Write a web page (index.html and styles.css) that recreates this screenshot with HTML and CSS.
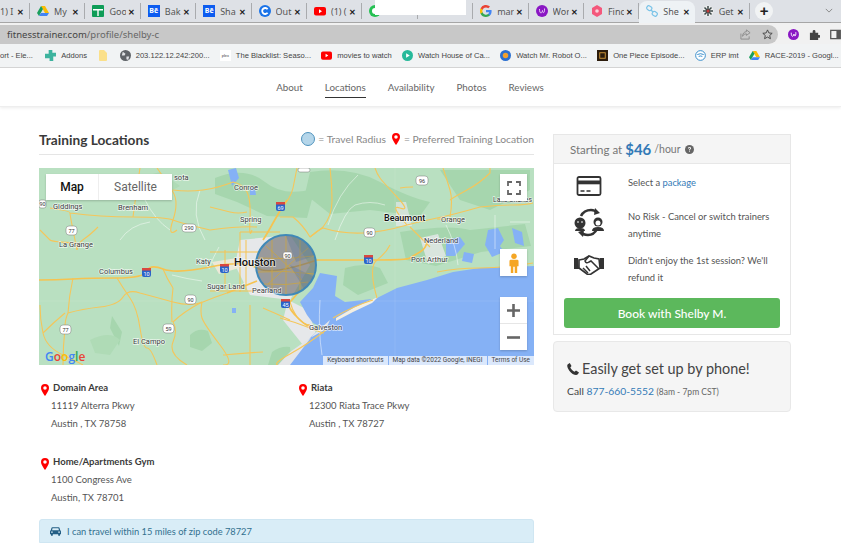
FILE: index.html
```html
<!DOCTYPE html>
<html lang="en">
<head>
  <meta charset="UTF-8">
  <meta name="viewport" content="width=device-width, initial-scale=1.0">
  <title>Shelby C. - Training Locations</title>
  <link rel="stylesheet" href="styles.css">
</head>
<body>
  <!-- browser chrome -->
  <div class="browser">
    <div class="tabstrip">
      <div class="tab tab-first"><span class="tab-label">1) I</span><span class="tab-x">✕</span></div>
      <div class="tab">
        <svg class="fav" viewBox="0 0 12 12"><path d="M4 1h4l4 7H8z" fill="#fbbc04"/><path d="M4 1 0 8l2 3 4-7z" fill="#1a9f5c"/><path d="M2 11h8l2-3H4z" fill="#4285f4"/></svg>
        <span class="tab-label">My</span><span class="tab-x">✕</span>
      </div>
      <div class="tab">
        <svg class="fav" viewBox="0 0 12 12"><rect width="12" height="12" rx="1" fill="#0f9d58"/><path d="M1 4h10v1.400H6.700V11H5.300V5.400H1z" fill="#fff"/></svg>
        <span class="tab-label">Goo</span><span class="tab-x">✕</span>
      </div>
      <div class="tab">
        <span class="fav fav-be">Bē</span>
        <span class="tab-label">Bak</span><span class="tab-x">✕</span>
      </div>
      <div class="tab">
        <span class="fav fav-be">Bē</span>
        <span class="tab-label">Sha</span><span class="tab-x">✕</span>
      </div>
      <div class="tab">
        <svg class="fav" viewBox="0 0 12 12"><circle cx="6" cy="6" r="6" fill="#1a73e8"/><path d="M8.600 4.200A3 3 0 1 0 8.600 7.800" fill="none" stroke="#fff" stroke-width="1.800"/></svg>
        <span class="tab-label">Out</span><span class="tab-x">✕</span>
      </div>
      <div class="tab">
        <svg class="fav" viewBox="0 0 12 12"><rect y="2" width="12" height="8.400" rx="2" fill="#f00"/><path d="M5 4.200 8 6.200 5 8.200z" fill="#fff"/></svg>
        <span class="tab-label">(1) (</span><span class="tab-x">✕</span>
      </div>
      <div class="tab">
        <svg class="fav" viewBox="0 0 12 12"><circle cx="6" cy="6" r="6" fill="#25c052"/><circle cx="6" cy="6" r="3" fill="#fff"/></svg>
      </div>
      <div class="tab"></div>
      <div class="tab">
        <svg class="fav" viewBox="0 0 12 12"><path d="M11.600 6.200c0-.4 0-.8-.1-1.200H6v2.300h3.200A2.800 2.800 0 0 1 8 9.100v1.500h1.900c1.100-1 1.700-2.500 1.700-4.400z" fill="#4285f4"/><path d="M6 12c1.600 0 3-.5 3.900-1.400L8 9.100a3.600 3.600 0 0 1-5.400-1.900H.6v1.500A6 6 0 0 0 6 12z" fill="#34a853"/><path d="M2.600 7.200a3.600 3.600 0 0 1 0-2.400V3.300H.6a6 6 0 0 0 0 5.400z" fill="#fbbc04"/><path d="M6 2.400c.9 0 1.700.3 2.300.9L10 1.600A6 6 0 0 0 .6 3.300l2 1.500A3.600 3.600 0 0 1 6 2.400z" fill="#ea4335"/></svg>
        <span class="tab-label">mar</span><span class="tab-x">✕</span>
      </div>
      <div class="tab">
        <svg class="fav" viewBox="0 0 12 12"><circle cx="6" cy="6" r="6" fill="#8a17c4"/><path d="M3.500 4c0 5 2.500 5 3 1.500C7 9 9 8 8.500 3.500" fill="none" stroke="#e9c8f7" stroke-width="1"/></svg>
        <span class="tab-label">Wor</span><span class="tab-x">✕</span>
      </div>
      <div class="tab">
        <svg class="fav" viewBox="0 0 12 12"><path d="M6 0 11 3v6l-5 3-5-3V3z" fill="#f4587c"/><circle cx="6" cy="6" r="1.800" fill="#fbd0da"/></svg>
        <span class="tab-label">Finc</span><span class="tab-x">✕</span>
      </div>
      <div class="tab tab-active">
        <svg class="fav" viewBox="0 0 12 12"><g fill="none" stroke="#7cc4e8" stroke-width="1.200"><rect x="0.800" y="1" width="5" height="4" rx="1.500" transform="rotate(35 3 3)"/><rect x="6.200" y="7" width="5" height="4" rx="1.500" transform="rotate(35 9 9)"/><path d="M5 5l2 2"/></g></svg>
        <span class="tab-label">She</span><span class="tab-x">✕</span>
      </div>
      <div class="tab">
        <svg class="fav" viewBox="0 0 12 12"><circle cx="6" cy="6" r="5.500" fill="#eee"/><path d="M1 6h10M6 1v10M2.500 2.500l7 7M9.500 2.500l-7 7" stroke="#3c4a4a" stroke-width="1.500"/><circle cx="6" cy="6" r="1.500" fill="#c23b3b"/></svg>
        <span class="tab-label">Get</span><span class="tab-x">✕</span>
      </div>
      <div class="new-tab">+</div>
      <svg class="tab-menu" viewBox="0 0 10 6"><path d="M1 1l4 4 4-4" fill="none" stroke="#777" stroke-width="1"/></svg>
    </div>

    <div class="toolbar">
      <div class="omnibox">
        <span class="url">fitnesstrainer.com<span class="url-path">/profile/shelby-c</span></span>
        <svg class="omni-icon" viewBox="0 0 12 12"><path d="M1 5v6h9V8M7 1l4 3-4 3V5.300C5 5.300 3.500 6 2.800 8 2.800 5 4.500 3 7 2.900z" fill="none" stroke="#8b8b8b" stroke-width="1"/></svg>
        <svg class="omni-icon" viewBox="0 0 12 12"><path d="M6 1l1.500 3.300 3.600.4-2.700 2.400.8 3.500L6 8.800l-3.200 1.800.8-3.500L.9 4.700l3.600-.4z" fill="none" stroke="#444" stroke-width="1"/></svg>
      </div>
      <svg class="ext" viewBox="0 0 12 12"><circle cx="6" cy="6" r="6" fill="#8a17c4"/><path d="M3.500 4c0 5 2.500 5 3 1.500C7 9 9 8 8.500 3.500" fill="none" stroke="#fff" stroke-width="1"/></svg>
      <svg class="ext" viewBox="0 0 12 12"><path d="M1 4h3V2.500a1.500 1.500 0 0 1 3 0V4h3v2.500h1a1.500 1.500 0 0 1 0 3h-1V12H1z" fill="#444"/></svg>
      <svg class="ext" viewBox="0 0 12 12"><rect x="0.800" y="1.500" width="10.400" height="9" fill="none" stroke="#555" stroke-width="1.400"/><rect x="7" y="1.500" width="4" height="9" fill="#555"/></svg>
    </div>

    <div class="bookmarks">
      <span class="bm bm-cut">ort - Ele...</span>
      <span class="bm">
        <svg class="bm-icon" viewBox="0 0 12 12"><path d="M4 0h4v3h4v4H9v5H5V9H0V4h4z" fill="#3db39e"/></svg>Addons</span>
      <span class="bm">
        <svg class="bm-icon bm-folder" viewBox="0 0 8 11"><path d="M0 1q0-1 1-1h4l3 3v7q0 1-1 1H1q-1 0-1-1z" fill="#fbe08a"/></svg></span>
      <span class="bm">
        <svg class="bm-icon" viewBox="0 0 12 12"><circle cx="6" cy="6" r="6" fill="#5f6368"/><path d="M3 2l3 2-1 2-3 0zM7 7l3 0-1 4-2-1z" fill="#dfe1e5"/></svg>203.122.12.242:200...</span>
      <span class="bm">
        <span class="bm-plex">plex</span>The Blacklist: Seaso...</span>
      <span class="bm">
        <svg class="bm-icon" viewBox="0 0 12 12"><rect y="1.500" width="12" height="9" rx="2" fill="#f00"/><path d="M5 4l3 2-3 2z" fill="#fff"/></svg>movies to watch</span>
      <span class="bm">
        <svg class="bm-icon" viewBox="0 0 12 12"><circle cx="6" cy="6" r="6" fill="#27b99a"/><path d="M4.500 3.500 8.500 6l-4 2.500z" fill="#fff"/></svg>Watch House of Ca...</span>
      <span class="bm">
        <svg class="bm-icon" viewBox="0 0 12 12"><circle cx="6" cy="6" r="6" fill="#2a6fd0"/><circle cx="6" cy="6" r="3" fill="#f0a030"/></svg>Watch Mr. Robot O...</span>
      <span class="bm">
        <svg class="bm-icon" viewBox="0 0 12 12"><rect width="12" height="12" fill="#2c1c0c"/><rect x="3" y="3" width="6" height="6" fill="none" stroke="#d49a3a" stroke-width="1"/></svg>One Piece Episode...</span>
      <span class="bm">
        <svg class="bm-icon" viewBox="0 0 12 12"><circle cx="6" cy="6" r="5.300" fill="#fff" stroke="#2a86c8"/><path d="M2.500 5q3.500-2 7 0M4 7q2-1 4 0" fill="none" stroke="#2a86c8"/></svg>ERP imt</span>
      <span class="bm">
        <svg class="bm-icon" viewBox="0 0 12 12"><path d="M4 1h4l4 7H8z" fill="#fbbc04"/><path d="M4 1 0 8l2 3 4-7z" fill="#1a9f5c"/><path d="M2 11h8l2-3H4z" fill="#4285f4"/></svg>RACE-2019 - Googl...</span>
    </div>
    <div class="redacted"></div>
  </div>

  <!-- profile sub navigation -->
  <nav class="subnav">
    <a>About</a>
    <a class="current">Locations</a>
    <a>Availability</a>
    <a>Photos</a>
    <a>Reviews</a>
  </nav>

  <div class="page">
    <main class="main-col">
      <div class="section-head">
        <h2>Training Locations</h2>
        <div class="legend">
          <span class="legend-circle"></span><span>= Travel Radius</span>
          <svg class="pin legend-pin" viewBox="0 0 10 15"><path d="M5 0a5 5 0 0 0-5 5c0 3.500 5 10 5 10s5-6.500 5-10a5 5 0 0 0-5-5zm0 7.200a2.200 2.200 0 1 1 0-4.400 2.200 2.200 0 0 1 0 4.400z" fill="#f00"/></svg>
          <span>= Preferred Training Location</span>
        </div>
      </div>

      <div class="map">
        <svg class="map-svg" viewBox="39 168 495 197" preserveAspectRatio="none">
          <rect x="39" y="168" width="495" height="197" fill="#b9e0c1"/>
          <!-- darker forest patches -->
          <g fill="#a6d6ae">
            <path d="M215 178q30-12 50 4t50 6l-8 30-40-2-30-14-22-8z"/>
            <path d="M310 172q40-6 70 10t50 20l-10 14-50-6-40 4-25-20z"/>
            <path d="M400 232q50-8 70-2l55-6 6 22-50 6-45 14-30-6z"/>
            <path d="M345 268q20-6 35 0l8 15-30 12-15-10z"/>
            <path d="M190 335q8-8 18-4l4 12-10 8-12-4z"/>
            <path d="M272 352q8-6 18-5l2 18h-24z"/>
            <path d="M112 316l10 16-3 14-9-18z"/>
            <path d="M440 170h90v20l-40 20-30-10z"/>
            <path d="M130 180l30-8 20 14-25 14z" fill="#afdbb6"/>
            <path d="M90 340q20-10 30 0l-10 15-15-2z" fill="#afdbb6"/>
          </g>
          <!-- urban grey -->
          <g fill="#e6e8ea">
            <path d="M240 240l50-5 20 30-20 35-40-5-15-30z"/>
            <path d="M288 300l20 10 10 30-15 5-20-25z"/>
            <path d="M396 202l10 0 6 24-16 0z" opacity=".7"/>
            <path d="M212 262l25-4 2 10-20 6z" fill="#ece8d8"/>
            <path d="M420 238l18-4 8 22-18 8z" opacity=".8"/>
          </g>
          <!-- inland water -->
          <g fill="#85b1f5">
            <path d="M228 170l8-2 3 10-7 8z"/>
            <path d="M250 188l5 0 1 7-6 0z"/>
            <path d="M446 240l14-3 5 7-10 12-9 0z"/>
            <path d="M488 230l10-2 6 12-4 6 4 6-12 5-7-12z"/>
            <path d="M512 228l10 4 2 14-9-3z"/>
            <path d="M464 252l10 2-2 9-10-2z"/>
            <path d="M232 308l4 0 0 5-4 0z"/>
          </g>
          <!-- gulf and galveston bay -->
          <path d="M534 266 480 268 453 272 427 280 397 288 377 298 353 307 330 320 313 335 293 355 280 365H534z" fill="#85b1f5"/>
          <path d="M372 299 345 302 335 296 337 276 320 273 313 288 300 302 307 315 313 323 323 328 335 320 353 308z" fill="#85b1f5"/>
          <path d="M326 329 310 338 290 352 278 365H290L313 335 330 320z" fill="#e4e6e8"/>
          <path d="M336 318 355 307 378 297 372 303 353 312 336 321z" fill="#f3efe2"/>
          <path d="M395 168V365M39 301H534" stroke="#fff" stroke-width=".5" opacity=".2" fill="none"/>

          <!-- minor roads -->
          <g fill="none" stroke="#fff" stroke-width=".6" opacity=".8">
            <path d="M145 200q10 20 25 30M200 190q-10 25 5 50M219 247q-6 10-10 22M120 240q10-15 30-18M172 275q15 4 30 6M358 175q-20 18-30 50M320 300q-2 30 2 55M385 205q-15-5-30 0-10 5-20 35M446 225q10 20 12 40M495 215v34M510 222h20"/>
          </g>

          <!-- highways -->
          <g fill="none" stroke="#f5c65a" stroke-width="1.100">
            <path d="M40 230q8 8 10 10t27 3M50 208q20 3 20 5t3 17 4 20M70 213q30 4 63 4t40 3 37 10q30-4 47-3"/>
            <path d="M157 168q10 14 16 24t0 28 4 10M173 190q15 2 30 0t30-8q10 2 14 10t3 28 2 10"/>
            <path d="M210 207q12 3 20 5t17 0M133 217q4-30 7-49M98 227q-8 8-14 12t-7 11"/>
            <path d="M297 168q-2 10-4 20t-13 22M280 217h13q10 8 17 20M330 168q2 16 2 32t-9 27q-6 5-13 10"/>
            <path d="M310 237q6-6 13-9 20 6 40 5t44-8q15-4 30-7t43-11q20-2 33-2t20-2"/>
            <path d="M375 168q2 6 5 10t17 19 3 11 7 17M413 187q-8 0-13 1M443 168q4 12 7 22t0 27M410 227q10 10 20 20M437 219q10 0 23 1M490 168v5q-10 10-23 17t-17 10"/>
            <path d="M390 245q-4 8-13 15t0 38M437 272q20-4 43-4t53-5"/>
            <path d="M117 278q6 10 13 20t10 30 7 20 10 17M68 313q14-4 32-6t23-10 17-4q15 4 33 9t30 0 24-9"/>
            <path d="M173 322q5 8 0 20t14 23M173 322q10-10 29-20M173 288q-2 15-1 34M163 269q4 10 10 19M202 302q-2 10 0 16t18 27 3 20M223 355q20-2 40-3M250 305v60"/>
            <path d="M65 328q-2 18-2 37M68 313q-3 6-3 15M40 305q0 14 3 28t20 22 20 10M43 333q10-10 22-20M73 278q-4 18-5 35"/>
            <path d="M263 308q14 6 27 12M280 318q15 4 30 10t13 5M290 302q2 8 7 15t13 8M326 330q-18 14-36 24t-12 11M333 318q20-12 40-18"/>
          </g>
          <g fill="none" stroke="#f6c350" stroke-width="1.700">
            <path d="M39 280q17 0 34-1t44-1 30-7 16-2 47-2 47 1 60-8q30 0 60 0t33-2 10-6 7-12"/>
            <path d="M287 200q-8 12-14 23t-10 17"/>
            <path d="M300 290q-6 8-10 12t7 15 13 8"/>
            <path d="M227 293q15-6 30-12"/>
          </g>
          <g fill="none" stroke="#f6c350" stroke-width="1">
            <path d="M210 252h50M210 291h45M240 232v60M246 240v50M225 250v40M240 232h40"/>
          </g>

          <!-- travel radius -->
          <circle cx="286" cy="265" r="30" fill="#6b6b6b" fill-opacity=".62" stroke="#3f89b8" stroke-width="2"/>
          <g fill="none" stroke="#c9a544" stroke-width=".8">
            <path d="M258 258q28 2 56-2M258 272q28-2 56 2M264 284q22 2 44-2M272 240v50M286 236v58M300 240v50M266 246q16 14 36 34M308 248q-18 16-40 36"/>
          </g>
          <path d="M286 236a29 29 0 0 1 28 20l-18 6z" fill="#4d6fa0" opacity=".3"/>
          <path d="M290 265l24 12-10 12z" fill="#4d6fa0" opacity=".28"/>

          <!-- highway shields -->
          <g class="shields" font-size="5.500" text-anchor="middle">
            <g fill="#fff" stroke="#777" stroke-width=".5">
              <rect x="39" y="200" width="7" height="8" rx="2"/><rect x="66" y="226" width="11" height="9" rx="3"/><rect x="182" y="224" width="14" height="8" rx="3"/>
              <rect x="298" y="168" width="12" height="4" rx="2"/><rect x="416" y="176" width="12" height="9" rx="3"/><rect x="364" y="228" width="11" height="9" rx="3"/>
              <rect x="185" y="295" width="11" height="9" rx="3"/><rect x="163" y="324" width="11" height="9" rx="3"/><rect x="60" y="325" width="11" height="9" rx="3"/>
              <rect x="283" y="252" width="9" height="7" rx="2"/>
            </g>
            <g fill="#333" stroke="none">
              <text x="42.500" y="206">90</text><text x="71.500" y="233">77</text><text x="189" y="230">290</text>
              <text x="422" y="183">96</text><text x="369.500" y="235">90</text><text x="190.500" y="302">90</text>
              <text x="168.500" y="331">59</text><text x="65.500" y="332">77</text><text x="287.500" y="258">90</text>
            </g>
            <g fill="#2a63c8">
              <rect x="142" y="268" width="9" height="9" rx="2"/><rect x="220" y="264" width="9" height="9" rx="2"/><rect x="276" y="202" width="9" height="9" rx="2"/>
              <rect x="364" y="255" width="9" height="9" rx="2"/><rect x="281" y="299" width="9" height="9" rx="2"/>
            </g>
            <g fill="#d9473f">
              <rect x="142" y="268" width="9" height="2.500"/><rect x="220" y="264" width="9" height="2.500"/><rect x="276" y="202" width="9" height="2.500"/>
              <rect x="364" y="255" width="9" height="2.500"/><rect x="281" y="299" width="9" height="2.500"/>
            </g>
            <g fill="#fff" stroke="none">
              <text x="146.500" y="276">10</text><text x="224.500" y="272">10</text><text x="280.500" y="210">69</text>
              <text x="368.500" y="263">10</text><text x="285.500" y="307">45</text>
            </g>
          </g>

          <!-- place names -->
          <g class="labels" font-size="7.500">
            <text x="53" y="209">Giddings</text>
            <text x="118" y="210">Brenham</text>
            <text x="174" y="180">sota</text>
            <text x="234" y="190">Conroe</text>
            <text x="240" y="222">Spring</text>
            <text x="59" y="247">La Grange</text>
            <text x="99" y="274">Columbus</text>
            <text x="196" y="264">Katy</text>
            <text x="207" y="289">Sugar Land</text>
            <text x="252" y="293">Pearland</text>
            <text x="133" y="344">El Campo</text>
            <text x="441" y="222">Orange</text>
            <text x="424" y="243">Nederland</text>
            <text x="411" y="262">Port Arthur</text>
            <text x="309" y="330">Galveston</text>
            <text x="493" y="202" font-size="6.800">Lake Charles</text>
            <text class="label-big" x="234" y="266" font-size="11">Houston</text>
            <text class="label-big" x="384" y="221" font-size="9">Beaumont</text>
          </g>
          <text class="gmap-logo" x="45" y="361" font-size="12"><tspan fill="#4285f4">G</tspan><tspan fill="#ea4335">o</tspan><tspan fill="#fbbc04">o</tspan><tspan fill="#4285f4">g</tspan><tspan fill="#34a853">l</tspan><tspan fill="#ea4335">e</tspan></text>
        </svg>

        <div class="map-type">
          <span class="map-type-btn active">Map</span>
          <span class="map-type-btn">Satellite</span>
        </div>
        <div class="map-ctl map-full">
          <svg viewBox="0 0 14 14"><path d="M1 5V1h4M9 1h4v4M13 9v4H9M5 13H1V9" fill="none" stroke="#666" stroke-width="1.800"/></svg>
        </div>
        <div class="map-ctl map-peg">
          <svg viewBox="0 0 12 22"><circle cx="6" cy="3.500" r="3" fill="#f5a623"/><path d="M2.500 7.500h7q1.500 0 1.500 1.500v5.500H9.500V22H6.800v-7H5.200v7H2.500v-7.500H1V9q0-1.500 1.500-1.500z" fill="#f5a623"/></svg>
        </div>
        <div class="map-zoom">
          <span class="zoom-btn">
            <svg viewBox="0 0 13 13"><path d="M0 5.200h5.200V0h2.600v5.200H13v2.600H7.800V13H5.200V7.800H0z" fill="#666"/></svg>
          </span>
          <span class="zoom-btn">
            <svg viewBox="0 0 13 13"><rect y="5.200" width="13" height="2.600" fill="#666"/></svg>
          </span>
        </div>
        <div class="map-attrib">
          <span>Keyboard shortcuts</span>
          <span>Map data ©2022 Google, INEGI</span>
          <span>Terms of Use</span>
        </div>
      </div>

      <div class="addresses">
        <div class="address">
          <svg class="pin" viewBox="0 0 10 15"><path d="M5 0a5 5 0 0 0-5 5c0 3.500 5 10 5 10s5-6.500 5-10a5 5 0 0 0-5-5zm0 7.200a2.200 2.200 0 1 1 0-4.400 2.200 2.200 0 0 1 0 4.400z" fill="#f00"/></svg>
          <div>
            <strong>Domain Area</strong>
            <p>11119 Alterra Pkwy</p>
            <p>Austin , TX 78758</p>
          </div>
        </div>
        <div class="address">
          <svg class="pin" viewBox="0 0 10 15"><path d="M5 0a5 5 0 0 0-5 5c0 3.500 5 10 5 10s5-6.500 5-10a5 5 0 0 0-5-5zm0 7.200a2.200 2.200 0 1 1 0-4.400 2.200 2.200 0 0 1 0 4.400z" fill="#f00"/></svg>
          <div>
            <strong>Riata</strong>
            <p>12300 Riata Trace Pkwy</p>
            <p>Austin , TX 78727</p>
          </div>
        </div>
        <div class="address">
          <svg class="pin" viewBox="0 0 10 15"><path d="M5 0a5 5 0 0 0-5 5c0 3.500 5 10 5 10s5-6.500 5-10a5 5 0 0 0-5-5zm0 7.200a2.200 2.200 0 1 1 0-4.400 2.200 2.200 0 0 1 0 4.400z" fill="#f00"/></svg>
          <div>
            <strong>Home/Apartments Gym</strong>
            <p>1100 Congress Ave</p>
            <p>Austin, TX 78701</p>
          </div>
        </div>
      </div>

      <div class="travel-note">
        <svg class="car" viewBox="0 0 14 11"><path d="M3 0h8q.8 0 1.100.8L13 4q1 .5 1 1.500V9h-1.200v1.200q0 .8-.8.8h-.8q-.8 0-.8-.8V9H3.600v1.200q0 .8-.8.8H2q-.8 0-.8-.8V9H0V5.500Q0 4.500 1 4L1.900.8Q2.200 0 3 0zm.3 1.300L2.600 4h8.800l-.7-2.700zM2.500 5.300a1 1 0 1 0 0 2 1 1 0 0 0 0-2zm9 0a1 1 0 1 0 0 2 1 1 0 0 0 0-2z" fill="#245f85" fill-rule="evenodd"/></svg>
        I can travel within 15 miles of zip code 78727
      </div>
    </main>

    <aside class="side-col">
      <div class="price-card">
        <div class="price-head">
          Starting at <span class="price">$46</span> <span class="per">/hour</span>
          <svg class="help" viewBox="0 0 10 10"><circle cx="5" cy="5" r="5" fill="#666"/><path d="M3.300 3.900Q3.400 2.300 5 2.300q1.700 0 1.700 1.400c0 1.300-1.300 1.100-1.300 2.300H4.500c0-1.700 1.200-1.500 1.200-2.300 0-.9-1.300-.9-1.500.2zM4.500 6.600h.9v1H4.500z" fill="#fff"/></svg>
        </div>
        <div class="perks">
          <div class="perk perk-first">
            <svg class="perk-icon perk-card" viewBox="0 0 25 20"><rect x="1" y="1" width="23" height="18" rx="1.500" fill="#fff" stroke="#333" stroke-width="1.800"/><rect x="1" y="4.500" width="23" height="3.800" fill="#333"/><path d="M4 15h4M10 15h4" stroke="#333" stroke-width="1.500"/></svg>
            <p>Select a <a>package</a></p>
          </div>
          <div class="perk">
            <svg class="perk-icon perk-swap" viewBox="0 0 30 29"><path d="M7 8Q10 2 17 2q4 0 6 3M23 21q-3 6-9 6-5 0-7-3" fill="none" stroke="#333" stroke-width="2.600"/><path d="M21 0l5 5-6 2zM9 29l-5-5 6-2z" fill="#333"/><circle cx="6" cy="15" r="5.500" fill="#333"/><path d="M3 14h2M7 14h2" stroke="#fff"/><path d="M1 23q0-3 5-3t5 3z" fill="#333"/><circle cx="24" cy="14" r="4.500" fill="#333"/><circle cx="24" cy="15" r="2.500" fill="#fff"/><path d="M18 23q0-4 6-4t6 4z" fill="#333"/></svg>
            <p>No Risk - Cancel or switch trainers anytime</p>
          </div>
          <div class="perk">
            <svg class="perk-icon perk-hands" viewBox="0 0 30 20"><path d="M0 3h4l1 11H0zM30 3h-4l-1 11h5z" fill="#333"/><path d="M5 5l5-1 5-3 5 2 5 1 1 9-9 6q-2 1-4 0l-8-6z" fill="#fff" stroke="#333" stroke-width="1.600"/><path d="M15 1l-4 5q1 3 4 1l2-1 8 8M9 13l5 5M12 11l4 5" fill="none" stroke="#333" stroke-width="1.500"/></svg>
            <p>Didn't enjoy the 1st session? We'll refund it</p>
          </div>
        </div>
        <button class="book-btn">Book with Shelby M.</button>
      </div>

      <div class="phone-card">
        <h3>
          <svg class="phone-icon" viewBox="0 0 12 12"><path d="M2.800 0 .8 1.200C0 2 0 3.500 1 5.500 2.500 8.500 5 11 7.500 11.800c1.300.4 2.800 0 3.500-.8L12 9.500 9 7.500 7.500 8.700C6 8 4 6 3.300 4.500L4.500 3z" fill="#333"/></svg>
          Easily get set up by phone!
        </h3>
        <p>Call <a>877-660-5552</a> <small>(8am - 7pm CST)</small></p>
      </div>
    </aside>
  </div>
</body>
</html>
```

FILE: styles.css
```css
* {
  box-sizing: border-box;
  margin: 0;
  padding: 0;
}

html, body {
  height: 100%;
  overflow: hidden;
}

body {
  background-color: white;
  font-family: 'Lato', 'Liberation Sans', sans-serif;
  color: #555;
}

/* browser chrome */
.browser {
  position: relative;
  font-family: 'Noto Sans', 'Liberation Sans', sans-serif;
}

.tabstrip {
  display: flex;
  align-items: flex-start;
  height: 23px;
  background-color: #dee1e6;
  border-bottom: 1px solid #a6a6a6;
  position: relative;
}

.tab {
  flex: none;
  display: flex;
  align-items: center;
  width: 55.4px;
  height: 16px;
  margin-top: 3px;
  padding: 0 5px 0 7px;
  border-right: 1px solid #a9abae;
  font-size: 9px;
  color: #555;
  overflow: hidden;
}

.tab-first {
  width: 30px;
  padding-left: 0;
}

.tab-active {
  height: 22px;
  margin-top: 1px;
  background-color: #eef2f5;
  border-right: none;
  border-radius: 8px 8px 0 0;
  padding-bottom: 2px;
}

.fav {
  flex: none;
  width: 12px;
  height: 12px;
  margin-right: 5px;
}

.fav-be {
  display: block;
  background-color: #0d5cf0;
  color: white;
  font-size: 7px;
  font-weight: 700;
  line-height: 12px;
  text-align: center;
}

.tab-label {
  flex: 1;
  overflow: hidden;
  white-space: nowrap;
}

.tab-x {
  flex: none;
  font-size: 8px;
  font-weight: 700;
  color: #222;
  margin-left: 2px;
}

.new-tab {
  width: 18px;
  height: 18px;
  margin: 2px 0 0 5px;
  background-color: #f1f3f4;
  border-radius: 50%;
  color: #222;
  font: 700 15px/17px 'Liberation Sans', sans-serif;
  text-align: center;
}

.tab-menu {
  width: 8px;
  height: 5px;
  margin: 8px 0 0 52px;
}

.redacted {
  position: absolute;
  left: 375px;
  top: 0;
  width: 91px;
  height: 15px;
  background-color: white;
}

.toolbar {
  display: flex;
  align-items: flex-end;
  height: 21px;
  background-color: #f1f1f1;
}

.omnibox {
  display: flex;
  align-items: center;
  gap: 11px;
  width: 778px;
  height: 19px;
  padding: 0 5px 0 7px;
  background-color: #c8c8c8;
  border-radius: 0 10px 10px 0;
}

.url {
  flex: 1;
  font-size: 9.500px;
  color: #444;
}

.url-path {
  color: #666;
}

.omni-icon {
  width: 11px;
  height: 11px;
}

.ext {
  width: 11px;
  height: 11px;
  margin: 0 0 4px 10px;
}

.bookmarks {
  display: flex;
  align-items: center;
  gap: 10.300px;
  height: 24px;
  background-color: #f1f3f4;
  border-bottom: 1px solid #d4d4d4;
  font-family: 'Liberation Sans', sans-serif;
  font-size: 7.600px;
  color: #444;
  white-space: nowrap;
  overflow: hidden;
}

.bm {
  display: flex;
  align-items: center;
  flex: none;
}

.bm-cut {
  width: 35px;
}

.bm-icon {
  width: 11px;
  height: 11px;
  margin-right: 5px;
}

.bm-folder {
  width: 8px;
  margin: 0 2px;
}

.bm-plex {
  width: 11px;
  height: 11px;
  margin-right: 5px;
  background-color: white;
  font-size: 4px;
  line-height: 11px;
  text-align: center;
}

/* profile sub navigation */
.subnav {
  display: flex;
  justify-content: center;
  gap: 22px;
  height: 39px;
  padding: 11px 21px 0 0;
  border-bottom: 1px solid #eee;
  box-shadow: 0 1px 3px rgba(0, 0, 0, 0.08);
  font-size: 9.800px;
  color: #666;
}

.subnav a {
  height: 19px;
  line-height: 16px;
}

.subnav .current {
  border-bottom: 1px solid #333;
}

/* two columns */
.page {
  display: flex;
  gap: 19px;
  padding: 24px 0 0 39px;
}

.main-col {
  flex: none;
  width: 495px;
}

.side-col {
  flex: none;
  width: 238px;
  padding-top: 3px;
}

.section-head {
  display: flex;
  justify-content: space-between;
  align-items: center;
  height: 24px;
  border-bottom: 1px solid #e5e5e5;
  padding-bottom: 7px;
}

.section-head h2 {
  font-size: 13.700px;
  font-weight: 700;
  color: #3a3a3a;
}

.legend {
  display: flex;
  align-items: center;
  gap: 3px;
  font-size: 10.300px;
  color: #888;
}

.legend-circle {
  width: 14px;
  height: 14px;
  border-radius: 50%;
  background-color: #b5d6ea;
  border: 1px solid #4f93bd;
}

.pin {
  flex: none;
  width: 8px;
  height: 12px;
}

.legend-pin {
  margin: 0 1px 0 3px;
}

/* map */
.map {
  position: relative;
  height: 197px;
  margin-top: 13px;
  overflow: hidden;
}

.map-svg {
  display: block;
  width: 495px;
  height: 197px;
}

.labels text {
  font-family: 'Roboto', sans-serif;
  fill: #3c4043;
  stroke: rgba(255, 255, 255, 0.7);
  stroke-width: 1.500px;
  paint-order: stroke;
}

.labels .label-big {
  fill: #111;
  font-weight: 500;
}

.shields text {
  font-family: 'Roboto', sans-serif;
}

.gmap-logo {
  font-family: 'Open Sans', sans-serif;
  font-weight: 600;
}

.map-type {
  position: absolute;
  left: 7px;
  top: 6px;
  display: flex;
  width: 126px;
  height: 26px;
  background-color: white;
  box-shadow: 0 1px 2px rgba(0, 0, 0, 0.2);
  font-family: 'Roboto', sans-serif;
  font-size: 12px;
  line-height: 26px;
  text-align: center;
  color: #666;
}

.map-type-btn {
  flex: 1;
}

.map-type-btn.active {
  flex: none;
  width: 53px;
  color: #111;
  font-weight: 500;
  border-right: 1px solid #eee;
}

.map-ctl {
  position: absolute;
  left: 461px;
  display: flex;
  align-items: center;
  justify-content: center;
  width: 27px;
  height: 27px;
  background-color: white;
  box-shadow: 0 1px 2px rgba(0, 0, 0, 0.2);
}

.map-full {
  top: 6px;
}

.map-full svg {
  width: 14px;
  height: 14px;
}

.map-peg {
  top: 81px;
}

.map-peg svg {
  width: 12px;
  height: 20px;
}

.map-zoom {
  position: absolute;
  left: 461px;
  top: 129px;
  display: flex;
  flex-direction: column;
  width: 27px;
  height: 53px;
  background-color: white;
  box-shadow: 0 1px 2px rgba(0, 0, 0, 0.2);
}

.zoom-btn {
  flex: 1;
  display: flex;
  align-items: center;
  justify-content: center;
}

.zoom-btn:first-child {
  border-bottom: 1px solid #e6e6e6;
}

.zoom-btn svg {
  width: 13px;
  height: 13px;
}

.map-attrib {
  position: absolute;
  right: 0;
  bottom: 0;
  display: flex;
  height: 9px;
  font-family: 'Roboto', sans-serif;
  font-size: 6.500px;
  line-height: 9px;
  color: #444;
  white-space: nowrap;
}

.map-attrib span {
  padding: 0 4px;
  background-color: rgba(255, 255, 255, 0.7);
  margin-left: 1px;
}

/* address list */
.addresses {
  display: grid;
  grid-template-columns: 258px 1fr;
  row-gap: 20px;
  margin-top: 14px;
}

.address {
  display: flex;
  align-items: flex-start;
  gap: 4px;
  height: 54px;
  font-size: 9.500px;
  line-height: 18px;
  color: #555;
}

.address .pin {
  margin: 5px 0 0 2px;
}

.address strong {
  display: block;
  color: #3a3a3a;
  font-weight: 700;
}

.address p {
  margin-left: -2px;
}

.travel-note {
  display: flex;
  align-items: center;
  gap: 6px;
  height: 24px;
  margin-top: 12px;
  padding-left: 10px;
  background-color: #d9edf7;
  border: 1px solid #cfe6f2;
  border-radius: 3px 3px 0 0;
  font-size: 9.300px;
  color: #31708f;
}

.car {
  width: 11px;
  height: 9px;
}

/* sidebar */
.price-card {
  height: 201px;
  border: 1px solid #e7e7e7;
  background-color: white;
}

.price-head {
  display: flex;
  align-items: center;
  gap: 3px;
  height: 29px;
  padding-left: 16px;
  background-color: #f5f5f5;
  border-bottom: 1px solid #e7e7e7;
  font-size: 11.500px;
  color: #777;
}

.price {
  color: #337ab7;
  font-size: 15px;
  font-weight: 700;
}

.per {
  font-size: 10.500px;
}

.help {
  width: 9px;
  height: 9px;
  margin-left: 1px;
}

.perks {
  padding: 10px 10px 0 20px;
}

.perk {
  display: flex;
  align-items: flex-start;
  margin-bottom: 10px;
  font-size: 9.400px;
  line-height: 17px;
  color: #555;
}

.perk-first {
  min-height: 24px;
}

.perk p {
  flex: 1;
  margin-left: 24px;
}

.perk a {
  color: #337ab7;
}

.perk-icon {
  flex: none;
  width: 30px;
}

.perk-card {
  height: 20px;
  margin-top: 2px;
  padding: 0 2px;
}

.perk-swap {
  height: 29px;
}

.perk-hands {
  height: 20px;
  margin-top: 3px;
}

.book-btn {
  display: block;
  width: 216px;
  height: 30px;
  margin: 12px 0 0 10px;
  background-color: #5cb85c;
  color: white;
  border: none;
  border-radius: 3px;
  font-family: 'Lato', sans-serif;
  font-size: 12px;
  font-weight: 500;
}

.phone-card {
  height: 71px;
  margin-top: 6px;
  padding: 17px 13px 0;
  background-color: #f5f5f5;
  border: 1px solid #e8e8e8;
  border-radius: 4px;
  color: #444;
}

.phone-card h3 {
  display: flex;
  align-items: center;
  gap: 3px;
  font-size: 14.400px;
  font-weight: 400;
  line-height: 20px;
}

.phone-icon {
  width: 12px;
  height: 12px;
}

.phone-card p {
  margin-top: 6px;
  font-size: 10.300px;
}

.phone-card a {
  color: #337ab7;
}

.phone-card small {
  font-size: 8.500px;
  color: #666;
}
```
